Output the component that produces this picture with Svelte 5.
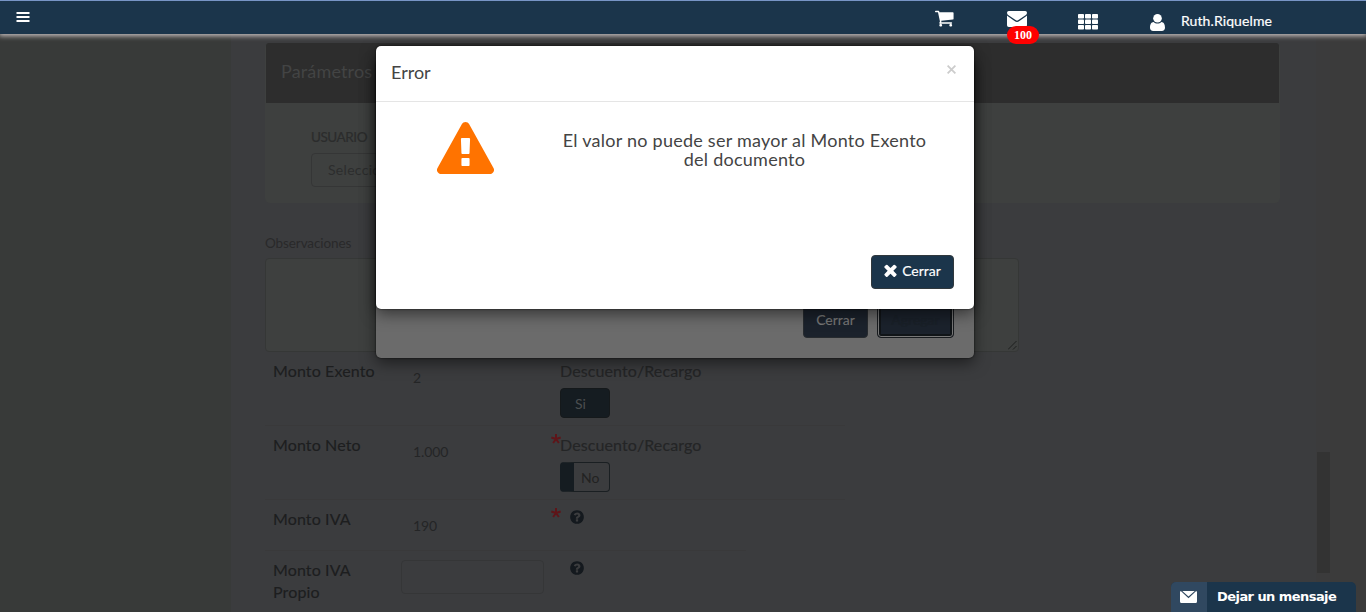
<script>
  const rows = [
    { label: 'Monto Exento', value: '2', toggle: 'Si', star: false, h: 74 },
    { label: 'Monto Neto', value: '1.000', toggle: 'No', star: true, h: 74 },
    { label: 'Monto IVA', value: '190', help: true, star: true, h: 51 },
    { label: 'Monto IVA Propio', input: true, help: true, star: false, h: 61 }
  ];
</script>

<div class="app">
  <header>
    <svg class="burger" width="14" height="10" viewBox="0 0 14 10"><path fill="#fff" d="M.5 0h13v2H.5zM.5 4h13v2H.5zM.5 8h13v2H.5z" /></svg>
    <nav>
      <svg class="cart" width="20" height="20" viewBox="0 0 1792 1792"><path fill="#fff" d="M640 1536q0 52-38 90t-90 38-90-38-38-90 38-90 90-38 90 38 38 90zm896 0q0 52-38 90t-90 38-90-38-38-90 38-90 90-38 90 38 38 90zm128-1088v512q0 24-16.500 42.500t-40.500 21.500l-1044 122q13 60 13 70 0 16-24 64h920q26 0 45 19t19 45-19 45-45 19h-1024q-26 0-45-19t-19-45q0-11 8-31.500t16-36 21.500-40 15.500-29.500l-177-823h-204q-26 0-45-19t-19-45 19-45 45-19h256q16 0 28.500 6.500t19.500 15.500 13 24.500 8 26 5.500 29.500 4.500 26h1201q26 0 45 19t19 45z" /></svg>
      <div class="mail">
        <svg width="20" height="16" viewBox="0 0 20 16"><path fill="#fff" d="M1.800 0h16.400Q20 0 20 1.700q0 1.500-1.500 2.600l-6.300 4.300Q10.800 9.700 10 9.700T7.800 8.600L1.500 4.300Q0 3.200 0 1.700 0 0 1.800 0zM0 4.600q.5.600 1.200 1l6 4.100Q9 11 10 11t2.800-1.300l6-4.100q.7-.4 1.200-1v9.600q0 1.800-1.800 1.800H1.800Q0 16 0 14.200z" /></svg>
        <span class="badge">100</span>
      </div>
      <svg class="grid" width="20" height="16" viewBox="0 0 20 16">
        {#each [0, 7, 14] as x}{#each [0, 5.5, 11] as y}<rect {x} {y} width="6" height="4.600" rx=".8" fill="#fff" />{/each}{/each}
      </svg>
      <svg class="user" width="15" height="17" viewBox="0 0 15 17"><path fill="#fff" d="M3.700 8C1 8.200 0 10.700 0 13.800 0 15.800 1.200 17 3.200 17h8.600c2 0 3.200-1.200 3.200-3.200 0-3.100-1-5.600-3.700-5.800C10.300 9 9 9.500 7.500 9.500S4.700 9 3.700 8z" /><circle cx="7.500" cy="4.300" r="4.300" fill="#fff" /></svg>
      <span class="name">Ruth.Riquelme</span>
    </nav>
  </header>

  <div class="body">
    <aside></aside>
    <main>
      <section class="panel">
        <h2>Parámetros</h2>
        <div class="panel-body">
          <label for="usuario">USUARIO</label>
          <div class="select" id="usuario">Seleccione</div>
        </div>
      </section>
      <div class="obs">Observaciones</div>
      <div class="area">
        <svg width="9" height="9" viewBox="0 0 9 9"><path d="M0 8.500L8.500 0M5 8.500L8.500 5" stroke="#1d1e1e" fill="none" /></svg>
      </div>
      <div class="rows">
        {#each rows as r}
          <div class="row" class:short={r.help} style="height:{r.h}px">
            <div class="label">{r.label}</div>
            <div class="value">{#if r.input}<div class="input"></div>{:else}{r.value}{/if}</div>
            <div class="star">{#if r.star}<svg width="10" height="10" viewBox="-5 -5 10 10"><path d="M0 0V-5M0 0L4.700-1.500M0 0L2.900 4M0 0L-2.900 4M0 0L-4.700-1.500" stroke="#5e1519" stroke-width="2" /></svg>{/if}</div>
            <div class="extra">
              {#if r.toggle}
                <div class="dr">Descuento/Recargo</div>
                <div class="toggle" class:on={r.toggle === 'Si'}><span>{r.toggle}</span></div>
              {:else}
                <svg class="help" width="16" height="16" viewBox="0 0 1792 1792"><path fill="#14191e" d="M1024 1376v-192q0-14-9-23t-23-9h-192q-14 0-23 9t-9 23v192q0 14 9 23t23 9h192q14 0 23-9t9-23zm256-672q0-88-55.500-163t-138.500-116-170-41q-243 0-371 213-15 24 8 42l132 100q7 6 19 6 16 0 25-12 53-68 86-92 34-24 86-24 48 0 85.500 26t37.500 59q0 38-20 61t-68 45q-63 28-115.500 86.500t-52.500 125.500v36q0 14 9 23t23 9h192q14 0 23-9t9-23q0-19 21.500-49.500t54.500-49.500q32-18 49-28.500t46-35 44.500-48 28-60.500 12.500-81zm384 192q0 209-103 385.500t-279.500 279.500-385.500 103-385.500-103-279.500-279.500-103-385.500 103-385.500 279.500-279.500 385.500-103 385.500 103 279.500 279.500 103 385.500z" /></svg>
              {/if}
            </div>
          </div>
        {/each}
      </div>
    </main>
    <div class="scroll"><div class="thumb"></div></div>
    <div class="gutter"></div>
  </div>

  <div class="dialog under">
    <span class="btn dim">Cerrar</span>
    <span class="btn dim focus">Agregar</span>
  </div>

  <div class="dialog over">
    <div class="head">
      <span>Error</span>
      <svg width="9" height="9" viewBox="0 0 9 9"><path d="M.6.600l7.800 7.800M8.400.600L.6 8.400" stroke="#ccc" stroke-width="1.800" /></svg>
    </div>
    <div class="content">
      <svg width="57" height="52" viewBox="0 0 1792 1664" preserveAspectRatio="none"><path fill="#ff7300" d="M1024 1375v-190q0-14-9.500-23.500t-22.500-9.500h-192q-13 0-22.500 9.500t-9.500 23.500v190q0 14 9.500 23.500t22.500 9.500h192q13 0 22.500-9.500t9.500-23.500zm-2-374l18-459q0-12-10-19-13-11-24-11h-220q-11 0-24 11-10 7-10 21l17 457q0 10 10 16.500t24 6.500h185q14 0 23.500-6.500t10.500-16.500zm-14-934l768 1408q35 63-2 126-17 29-46.500 46t-63.500 17h-1536q-34 0-63.500-17t-46.500-46q-37-63-2-126l768-1408q17-31 47-49t65-18 65 18 47 49z" /></svg>
      <p>El valor no puede ser mayor al Monto Exento del documento</p>
    </div>
    <div class="foot">
      <span class="btn">
        <svg width="13" height="13" viewBox="302 302 1188 1252"><path fill="#fff" d="M1490 1322q0 40-28 68l-136 136q-28 28-68 28t-68-28l-294-294-294 294q-28 28-68 28t-68-28l-136-136q-28-28-28-68t28-68l294-294-294-294q-28-28-28-68t28-68l136-136q28-28 68-28t68 28l294 294 294-294q28-28 68-28t68 28l136 136q28 28 28 68t-28 68l-294 294 294 294q28 28 28 68z" /></svg>
        <span>Cerrar</span>
      </span>
    </div>
  </div>

  <div class="chat">
    <div class="chat-icon"><svg width="17" height="12" viewBox="0 0 17 12"><path fill="#fff" d="M2.300 0h12.400L8.500 5.500zM0 1.200Q0 .5.800.100L8.500 7.300 16.200.1q.8.400.8 1.100v9.300q0 1.500-1.500 1.500h-14Q0 12 0 10.500z" /></svg></div>
    <span>Dejar un mensaje</span>
  </div>
</div>

<style>
  :global(body) { margin: 0; overflow: hidden; }
  * { box-sizing: border-box; }
  svg { display: block; flex: none; }
  .app { position: relative; width: 1366px; height: 612px; overflow: hidden; background: #3b3c3e; font-family: Lato, "Open Sans", sans-serif; font-size: 14px; display: flex; flex-direction: column; white-space: nowrap; }
  header { position: relative; z-index: 2; flex: none; height: 34px; background: #1b354b; border-top: 1px solid #7895c6; box-shadow: 0 1px 5px 1px #c4bebe; display: flex; justify-content: space-between; padding-left: 16px; }
  .burger { margin-top: 11px; }
  nav { display: flex; width: 431px; }
  .cart { margin-top: 7px; }
  .mail { position: relative; margin: 10px 0 0 52px; }
  .badge { position: absolute; left: 0; top: 15px; width: 32px; height: 18px; border-radius: 9px; background: #f00; color: #fff; font: bold 12px/18px "Liberation Serif", serif; text-align: center; }
  .grid { margin: 13px 0 0 51px; }
  .user { margin: 13px 0 0 52px; }
  .name { margin: 10px 0 0 16px; color: #fff; line-height: 20px; font-size: 14px; letter-spacing: .1px; -webkit-text-stroke: .2px; }
  .body { flex: 1; min-height: 0; display: flex; }
  aside { width: 231px; background: #383a39; flex: none; }
  main { flex: 1; padding: 9px 0 0 34px; display: flex; flex-direction: column; background: #3b3c3e; overflow: hidden; }
  .panel { width: 1015px; height: 160px; background: #3e403f; border-radius: 5px; flex: none; }
  h2 { margin: 0 1px; height: 60px; padding-left: 15px; background: #2d2d2d; border-radius: 3px 3px 0 0; color: #434444; font-size: 18px; line-height: 57px; font-weight: 400; letter-spacing: .15px; }
  .panel-body { padding: 25px 0 0 46px; }
  .panel-body label { display: block; height: 25px; line-height: 18px; font-size: 13.500px; color: #2b2c2c; -webkit-text-stroke: .2px; letter-spacing: -.45px; }
  .select { width: 300px; height: 34px; border: 1px solid #353636; border-radius: 4px; padding-left: 16px; line-height: 32px; color: #2c2d2d; letter-spacing: .3px; }
  .obs { height: 55px; padding-top: 31px; line-height: 18px; color: #29292a; font-size: 13.500px; letter-spacing: -.1px; flex: none; }
  .area { width: 754px; height: 94px; flex: none; border: 1px solid #353736; border-radius: 4px; background: #3e403f; display: flex; justify-content: flex-end; align-items: flex-end; padding: 1px; }
  .rows { width: 580px; flex: none; }
  .row { display: grid; grid-template-columns: 136px 150px 9px 1fr; border-bottom: 1px solid #39393a; }
  .row:last-child { border: 0; }
  .row.short:nth-child(3) { width: 481px; }
  .label { padding: 8px 0 0 8px; width: 120px; white-space: normal; color: #1d1e1f; font-size: 16px; line-height: 22px; -webkit-text-stroke: .15px; letter-spacing: .12px; }
  .value { padding: 16px 0 0 12px; color: #242526; line-height: 20px; letter-spacing: -.1px; }
  .input { width: 143px; height: 34px; margin: -7px 0 0 -12px; border: 1px solid #353637; border-radius: 4px; }
  .star { padding-top: 8px; }
  .extra { padding-top: 8px; }
  .dr { font-size: 16px; line-height: 22px; color: #242526; -webkit-text-stroke: .15px; letter-spacing: .1px; }
  .toggle { width: 50px; height: 30px; margin-top: 6px; border: 1px solid #1a1f22; border-radius: 4px; border-left: 14px solid #151c21; color: #222; padding: 0 0 0 7px; line-height: 30px; }
  .toggle.on { background: #151c21; border: 1px solid #15191b; padding-left: 14px; color: #4b4e50; }
  .help { margin: 1px 0 0 9px; }
  .scroll { width: 14px; background: #3b3b3c; padding: 418px 0 0 1px; }
  .thumb { height: 121px; background: #333; }
  .gutter { width: 36px; background: #3b3b3b; }
  .dialog { position: absolute; left: 376px; width: 598px; border-radius: 5px; box-shadow: 0 5px 15px rgba(0, 0, 0, .5), 0 0 2px rgba(0, 0, 0, .8); }
  .under { top: 60px; height: 298px; background: #6b6b6b; display: flex; justify-content: flex-end; align-items: flex-end; gap: 9px; padding: 20px; }
  .over { top: 46px; height: 263px; z-index: 1; background: #fff; display: flex; flex-direction: column; }
  .head { height: 56px; flex: none; border-bottom: 1px solid #e5e5e5; display: flex; justify-content: space-between; padding: 14px 18px 0 15px; color: #444; font-size: 18px; line-height: 24px; }
  .head svg { margin-top: 5px; }
  .content { height: 134px; display: flex; padding: 20px 29px 0 61px; justify-content: space-between; align-items: flex-start; }
  p { width: 401px; margin: 9px 0 0; padding: 0 15px; text-align: center; color: #444; font-size: 18px; line-height: 19px; letter-spacing: .25px; white-space: normal; }
  .foot { display: flex; justify-content: flex-end; padding: 19px 20px; }
  .btn { display: flex; justify-content: center; height: 34px; width: 83px; border: 1px solid #30383d; border-radius: 4px; background: #1b354b; color: #fff; line-height: 30px; gap: 5px; -webkit-text-stroke: .15px; }
  .btn svg { margin-top: 8px; }
  .btn.dim { width: 65px; background: #1b222c; border-color: #272b2f; color: #777; }
  .btn.focus { width: 77px; border: 1px solid #181b1e; box-shadow: inset 0 0 0 1px #777, inset 0 0 0 3px #111518; color: #192028; }
  .chat { position: absolute; z-index: 3; left: 1171px; top: 582px; width: 185px; height: 30px; background: #1b354b; border-radius: 5px 5px 0 0; overflow: hidden; display: flex; color: #fff; font: bold 13px/29px "DejaVu Sans", sans-serif; }
  .chat-icon { width: 36px; padding: 9px 0 0 9px; background: #304860; margin-right: 10px; }
  .chat span { letter-spacing: -.56px; }
</style>
